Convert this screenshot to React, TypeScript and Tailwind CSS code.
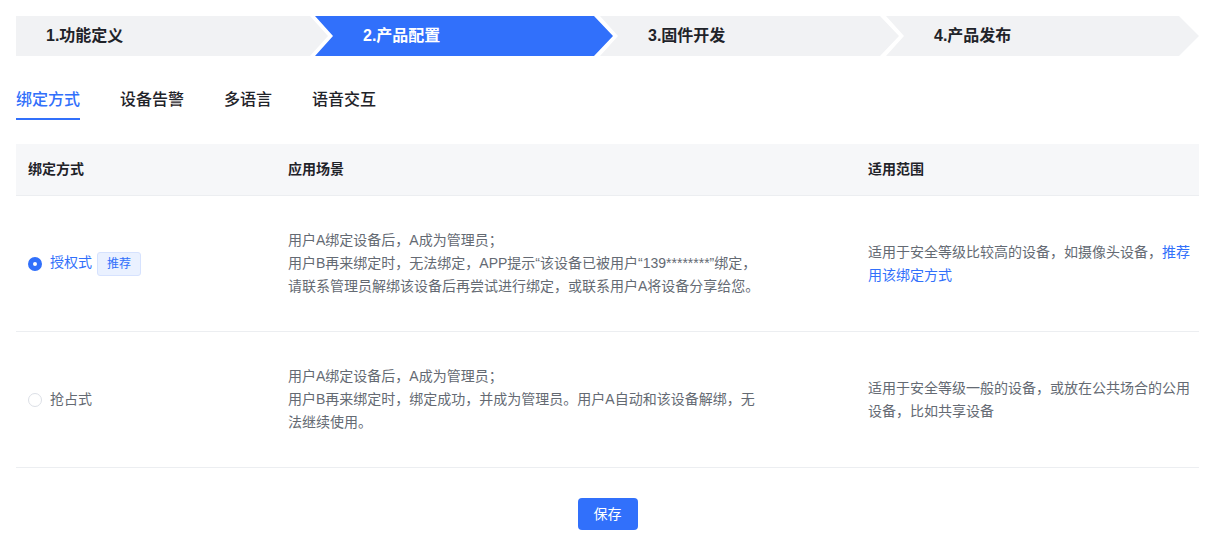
import { useState } from 'react';

const font = { fontFamily: '"Liberation Sans", "Noto Sans CJK SC", sans-serif' };

const steps = [
  { label: '1.功能定义', cls: 'w-[312px] pl-[30px] [clip-path:polygon(0_0,calc(100%_-_18px)_0,100%_50%,calc(100%_-_18px)_100%,0_100%)] bg-[#f1f2f4] text-[#1f2329]' },
  { label: '2.产品配置', cls: 'w-[298px] -ml-[13px] pl-[48px] [clip-path:polygon(0_0,calc(100%_-_19px)_0,100%_50%,calc(100%_-_19px)_100%,0_100%,18px_50%)] bg-[#3170fb] text-white' },
  { label: '3.固件开发', cls: 'w-[299px] -ml-[13px] pl-[48px] [clip-path:polygon(0_0,calc(100%_-_19px)_0,100%_50%,calc(100%_-_19px)_100%,0_100%,18px_50%)] bg-[#f1f2f4] text-[#1f2329]' },
  { label: '4.产品发布', cls: 'flex-1 -ml-[13px] pl-[48px] [clip-path:polygon(0_0,calc(100%_-_20px)_0,100%_50%,calc(100%_-_20px)_100%,0_100%,18px_50%)] bg-[#f1f2f4] text-[#1f2329]' },
];

const tabs = ['绑定方式', '设备告警', '多语言', '语音交互'];

export default function App() {
  const [tab, setTab] = useState(0);
  const [mode, setMode] = useState('auth');

  return (
    <div style={font} className="h-[547px] w-[1214px] overflow-hidden bg-white pt-4 pr-[15px] pl-4 text-sm">
      <div className="flex h-10">
        {steps.map((s) => (
          <div key={s.label} className={`flex items-center text-base font-bold ${s.cls}`}>
            {s.label}
          </div>
        ))}
      </div>

      <div className="mt-6 flex gap-10">
        {tabs.map((t, i) => (
          <button
            key={t}
            onClick={() => setTab(i)}
            className={`h-10 border-b-2 pt-0.5 text-base font-medium ${i === tab ? 'border-[#3170fb] text-[#3170fb]' : 'border-transparent text-[#1f2329]'}`}
          >
            {t}
          </button>
        ))}
      </div>

      <div className="mt-6">
        <div className="grid h-[52px] grid-cols-[260px_580px_1fr] items-center border-b border-[#eceef1] bg-[#f6f7f9] pb-0.5 font-bold text-[#1f2329]">
          <div className="pl-3">绑定方式</div>
          <div className="pl-3">应用场景</div>
          <div className="pl-3">适用范围</div>
        </div>

        <div className="grid h-[136px] grid-cols-[260px_580px_1fr] items-center border-b border-[#eceef1] leading-[23px] text-[#646a73]">
          <div className="flex items-center pl-3">
            <button onClick={() => setMode('auth')} className="flex items-center gap-2">
              <span className={`h-3.5 w-3.5 rounded-full ${mode === 'auth' ? 'border-[5px] border-[#3170fb] bg-white' : 'border border-[#dcdfe6] bg-white'}`} />
              <span className={`pb-0.5 ${mode === 'auth' ? 'text-[#3170fb]' : ''}`}>授权式</span>
            </button>
            <span className="ml-[5px] flex h-6 w-11 items-center justify-center rounded-[3px] border border-[#d6e2fe] bg-[#eaf1ff] text-xs text-[#3170fb]">推荐</span>
          </div>
          <div className="pl-3">
            <div className="max-w-[474px]">
              用户A绑定设备后，A成为管理员；<br />
              用户B再来绑定时，无法绑定，APP提示“该设备已被用户“139********”绑定，请联系管理员解绑该设备后再尝试进行绑定，或联系用户A将设备分享给您。
            </div>
          </div>
          <div className="pl-3">
            适用于安全等级比较高的设备，如摄像头设备，<span className="text-[#3170fb]">推荐用该绑定方式</span>
          </div>
        </div>

        <div className="grid h-[136px] grid-cols-[260px_580px_1fr] items-center border-b border-[#eceef1] leading-[23px] text-[#646a73]">
          <div className="flex items-center pl-3">
            <button onClick={() => setMode('grab')} className="flex items-center gap-2">
              <span className={`h-3.5 w-3.5 rounded-full ${mode === 'grab' ? 'border-[5px] border-[#3170fb] bg-white' : 'border border-[#dcdfe6] bg-white'}`} />
              <span className={mode === 'grab' ? 'text-[#3170fb]' : ''}>抢占式</span>
            </button>
          </div>
          <div className="pl-3">
            <div className="max-w-[474px]">
              用户A绑定设备后，A成为管理员；<br />
              用户B再来绑定时，绑定成功，并成为管理员。用户A自动和该设备解绑，无法继续使用。
            </div>
          </div>
          <div className="pl-3">适用于安全等级一般的设备，或放在公共场合的公用设备，比如共享设备</div>
        </div>
      </div>

      <div className="mt-[30px] flex justify-center">
        <button className="h-8 w-[60px] rounded-[4px] bg-[#3170fb] text-white">保存</button>
      </div>
    </div>
  );
}
